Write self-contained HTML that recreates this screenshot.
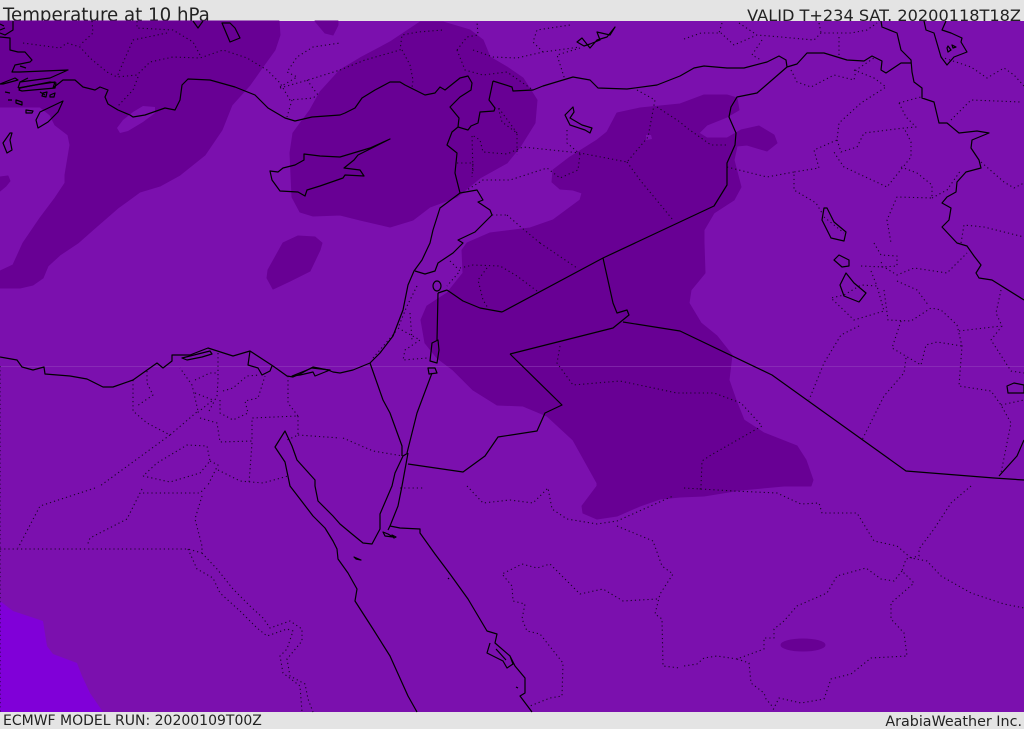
<!DOCTYPE html>
<html><head><meta charset="utf-8"><title>Temperature at 10 hPa</title>
<style>
html,body{margin:0;padding:0;background:#e4e4e4}
#w{position:relative;width:1024px;height:729px;overflow:hidden;background:#e4e4e4;font-family:"DejaVu Sans","Liberation Sans",sans-serif;color:#222}
.t{position:absolute;white-space:nowrap;line-height:1}
svg{position:absolute;left:0;top:0}
</style></head><body><div id="w">
<div class="t" style="left:3px;top:7px;font-size:18.2px">Temperature at 10 hPa</div>
<div class="t" style="right:3px;top:8px;font-size:16.15px">VALID T+234 SAT. 20200118T18Z</div>
<div class="t" style="left:3px;top:714px;font-size:14px">ECMWF MODEL RUN: 20200109T00Z</div>
<div class="t" style="right:2px;top:715px;font-size:14.3px">ArabiaWeather Inc.</div>
<svg width="1024" height="729" viewBox="0 0 1024 729">
<rect x="0" y="21" width="1024" height="691" fill="#7b10ae"/>
<g fill="#680094" stroke="#680094" stroke-width="1" stroke-linejoin="round">
<path d="M0 21L279 21 280 35 275 50 262 68 250 85 232 105 222 130 205 155 180 175 160 186 140 192 118 208 95 228 78 243 60 255 48 266 43 278 33 285 20 288 0 288 0 271 13 265 23 243 40 218 55 198 65 183 65 175 70 145 68 135 55 125 50 115 40 107 0 107Z"/>
<path d="M0 177L8 176 10 181 6 186 0 191Z"/>
<path d="M315 21L325 33 333 35 338 25 338 21Z"/>
<path d="M420 22L390 42 360 58 340 70 320 92 310 110 293 133 290 153 292 197 300 212 313 216 340 215 360 220 390 227 413 220 430 207 457 197 480 178 507 163 520 147 535 123 537 100 523 78 507 67 490 57 483 40 470 30 443 22Z"/>
<path d="M298 236L315 237 322 243 320 250 310 271 290 281 273 289 267 278 268 270 283 243Z"/>
<path d="M467 243L490 233 530 228 553 220 580 200 582 193 573 190 560 189 552 182 553 170 570 157 597 140 607 132 617 113 640 108 680 104 704 95 727 95 737 98 739 110 727 117 707 125 699 133 707 138 727 138 741 130 759 126 774 135 777 143 767 151 747 145 737 146 734 160 741 187 734 200 714 213 704 230 704 243 705 273 691 290 689 303 701 323 717 336 732 355 729 380 736 400 744 420 764 433 797 446 806 460 813 480 811 486 784 486 741 490 704 496 680 497 660 499 640 506 617 516 597 519 583 513 582 506 597 486 597 483 573 440 547 416 523 406 497 405 473 390 453 370 437 358 425 343 421 320 427 306 447 293 463 273 462 250Z"/>
<ellipse cx="803" cy="645" rx="22" ry="6"/>
</g>
<path d="M117 128L123 120 133 112 143 106 155 107 155 113 143 122 128 131 120 133Z" fill="#7b10ae"/>
<path d="M646 135L651 135 652 139 646 140Z" fill="#7b10ae"/>
<path d="M0 601L13 611 43 621 47 646 53 654 77 663 82 676 90 693 103 712 0 712Z" fill="#8000d8"/>
<rect x="0" y="366" width="1024" height="1" fill="#9a4cc0" opacity=".45"/>

<g fill="none" stroke="#1a0428" stroke-width="1.1" stroke-dasharray="1.2 3" stroke-linejoin="round">
<path d="M0 366V712"/>
<path d="M23 43L60 48 67 43 80 47 90 58 107 72 117 77 137 75 150 62 173 57 200 58 223 50 247 58 267 70 280 83 290 100 313 98 317 95"/>
<path d="M92 21L93 33 80 45M137 21L137 28 173 30 193 42 200 55M167 33L133 40 122 65 117 77M138 77L133 90 117 107M280 87L297 77 287 72 297 57 313 47 340 43M280 88L308 80 340 70M292 100L287 117M307 80L318 95"/>
<path d="M340 70L365 60 400 50 402 35 418 32 443 30M402 50L410 65 413 80 412 88M457 50L467 37 478 35 477 22M457 50L465 70 483 75 507 72 533 90M473 50L493 57 517 58 543 52 580 47M543 52L533 42 537 30 570 25M580 48L557 55 565 80"/>
<path d="M637 90L655 100 648 137 627 162 580 153 523 147 507 154 483 152 480 140 472 135 473 173M517 133L498 107 502 122 517 133 517 155M567 130L567 143 580 154M627 162L640 180 673 220M657 107L680 122 687 128 711 145 727 145M580 154L578 170 560 178 547 168 510 180 483 180 467 190M507 215L522 228 540 243M492 215L507 215M457 163L473 163 472 177"/>
<path d="M684 39L701 33 721 33 734 45 757 35 781 37 814 40 821 33 851 33 867 30 877 23M739 23L757 35M762 40L752 55 761 60M819 23L821 33M839 37L839 58M722 23L719 33M791 70L797 82 811 87 834 75 854 80 856 70 874 58M854 70L874 78 886 87 861 103 839 123 837 140 814 150 819 168 794 172 794 190 816 203 822 213M727 167L767 177 794 172M837 140L841 152 857 147 864 133 904 128 911 142 911 157 887 187 844 167 839 160 834 152M901 167L917 173 932 185 932 198 897 197 887 220 891 243M932 198L947 190 961 170M899 103L917 98 921 97M899 103L906 117 916 127 904 128M951 120L971 100 1021 102M941 57L971 67 987 78 1004 68 1014 75 1024 86M981 162L1004 182 1014 188 1024 183M961 243L964 225 984 227 1024 237M824 217L844 233"/>
<path d="M874 243L881 255 897 256 897 266 882 267 881 260M861 266L884 267 897 275 914 268 947 273 967 253M871 271L877 286 861 285 844 295 831 298 854 320 884 311 877 286M884 290L888 320 911 321 931 308 941 310 957 325 962 346 959 386 991 391 1001 405 1011 423 1001 473M897 281L917 290 929 306M901 321L892 348 921 365 926 345 937 342 962 346M959 331L1001 326M1001 290L996 313 1002 326 991 340 1011 371 1024 373M906 358L904 373 884 396 862 440M859 326L841 335 824 363 809 400M1001 405L1024 400M686 393L714 393 741 403 762 426 711 455 702 461 701 486 700 490"/>
<path d="M560 346L557 363 573 385 620 381 677 393 686 393M540 243L577 268M537 291L517 276 500 266 473 265 460 268M487 268L478 280 483 300 488 308M417 286L407 306 398 328 420 340 405 350 403 360 427 358M373 358L397 330M410 313L412 340M450 261L460 271 447 286M343 438L373 451 403 456"/>
<path d="M133 380L133 411 147 423 170 435 198 411 192 385 180 368M147 371L147 383 153 395 137 406M170 435L100 486M195 380L210 373 217 373M218 353L218 380 217 396 208 413M195 393L213 400 197 413M220 400L220 413 233 420 248 413 245 401 258 398 265 376M223 391L233 388 247 376 260 375M200 418L217 423 220 442 252 441 252 418 297 416M252 443L249 483M298 416L298 435 287 440M298 435L340 438M288 376L288 403 298 416M143 476L170 482 200 473 210 461 207 446 187 445 157 463 143 476M210 461L218 465 208 485M218 470L240 481 263 483 288 476"/>
<path d="M95 488L40 506 18 548M142 489L127 519 90 538 87 546M143 493L200 493 207 486M0 549H188L202 553 202 546 195 519 202 496M188 549L197 569 213 578 220 593 240 611 257 628 267 636 287 629 293 631 287 649 280 656 283 673 300 686 302 712M202 553L217 569 233 589 250 606 263 618 270 628 290 621 302 629 302 641 287 659 290 676 305 684 308 699 313 712"/>
<path d="M400 488L423 488M467 486L483 503 510 500 533 503 548 488 552 509 567 519 597 524 617 521 673 496M617 526L653 541 662 566 673 574 660 594 655 614 662 619 663 666 680 668M657 599L623 601 603 589 580 594 567 581 550 564 537 568 522 564 502 574 512 586 513 601 525 604 522 619 527 631 540 634 563 663 562 696 550 698 530 706"/>
<path d="M684 488L734 491 777 493 801 504 819 503 822 513 857 513 874 541 897 546 911 558 927 561 941 576 971 593 1004 604 1024 608M971 486L951 503 934 529 919 549 919 556 906 559 902 571 914 583 891 603 891 619 904 633 907 656 871 658 851 674 831 679 824 699 801 703 779 698 772 712M902 571L894 581 881 579 866 568 837 576 827 593 797 606 784 621 774 629 774 638 764 638 764 649 737 659 717 656 704 658 697 664 684 666M737 659L749 663 751 683 764 693 766 699 772 706"/>
</g>

<g fill="none" stroke="#000" stroke-width="1.2" stroke-linejoin="round">
<path d="M13 21L13 30 5 35 0 33M0 37L10 38 10 50 18 52 25 52 32 60 30 62 15 65 12 72 20 72 68 70 50 78 20 82 18 88M18 88L35 85 55 82 53 88 63 80 75 80 83 87 95 90 100 87 108 90 105 97 108 104 118 110 130 115 133 117 145 115 165 108 175 110 180 100 182 85 188 79 210 80 235 87 255 95 268 108 285 118 295 121 312 117 340 115 345 113 355 108 362 98 375 90 390 82 400 82 405 85 425 95 435 93 440 87 445 90 460 78 468 76 472 83 471 90 460 97 450 107 459 118 458 127 452 132 447 145 457 153 455 173 460 193 440 208 433 230 430 243 422 260 414 271 408 285 403 310 393 336 380 353 370 363 353 370 340 373 333 372 328 370 313 367 300 374 293 377 287 376 273 366 250 351 233 356 208 348 190 355 172 355 172 361 163 368 157 363 133 380 113 387 103 387 87 379 70 376 45 374 44 367 33 370 22 367 17 360 0 357"/>
<path d="M0 84L15 78 18 80 3 84ZM20 82L28 78M20 66L26 68M8 100L12 100M5 92L10 93M26 110L33 111 32 113 26 113ZM16 100L22 102 22 105 16 103ZM40 92L45 95M43 93L47 92 46 97 42 96ZM50 95L55 93 54 97 50 97ZM20 88L50 82 56 83 55 88 22 91 19 90ZM0 24L4 26M0 30L5 28"/>
<path d="M63 101L40 112 36 120 38 128 48 122 58 112 63 101ZM10 133L3 143 7 153 12 150 10 140 12 133ZM222 23L230 42 240 38 235 28 230 23ZM193 21L198 28 203 21"/>
<path d="M182 358L210 351 212 354 202 357 187 360ZM250 351L248 365 258 368 262 375 270 371 272 366M292 376L312 368 330 370 315 376 313 372 300 375Z"/>
<path d="M370 363L383 400 390 413 402 446 402 456M438 293L437 340M432 373L417 413 407 453M408 453L403 456 395 473 392 486 380 514 380 529 372 544 363 543 352 534 340 524 333 516 318 501 315 486 315 480 297 460 292 446 285 431 275 447 285 462 290 486 300 499 313 516 325 528 333 541 337 549 338 559 348 573 357 589 355 601 373 629 390 656 408 696 417 712M408 453L402 486 398 506 390 526 388 530M390 526L400 528 420 529 420 533 435 554 450 574 468 599 487 631 497 634 495 643 510 656 515 666 525 678 525 693 520 696 532 712M490 643L487 653 503 661 507 668 513 664 510 656M496 649L506 660M383 532L388 534 393 537 385 536ZM392 535L396 537 394 538ZM354 557L361 560 356 559ZM448 578L449 579M516 687L518 688"/>
<path d="M502 312L603 258 714 206 727 185 727 163 735 145 736 133 729 117 731 107 737 97 757 93 787 67M493 81L512 87 513 91 533 90 543 86 573 77 590 80 598 88 627 89 657 85 680 76 694 68 704 66 727 68 744 68 767 62 779 56 786 60 787 67 797 64 807 53 824 53 847 60 864 61 872 56 882 61 881 70 886 73 901 63 911 63M493 81L489 100 495 108 494 111 480 112 478 123 471 126 468 130 458 127M881 21L882 27 897 33 901 50 911 60 912 72 914 82 922 88 922 98 934 102 939 123 947 123 959 133 977 131 989 133 972 140 971 148 979 160 981 168 966 172 957 182 956 192 947 197 942 203 951 208 949 220 942 227 957 243 967 246 974 256 981 265 976 273 979 278 992 280 1024 300"/>
<path d="M924 21L926 30 934 33 941 57 947 65 954 57 967 52 961 42 962 38 951 33 942 30 946 21M948 46L951 50 948 52 947 48ZM952 45L956 47 953 48Z"/>
<path d="M824 208L822 220 831 238 844 241 846 232 834 222 827 208ZM834 260L839 255 849 260 849 266 842 267ZM846 273L854 283 866 293 859 302 844 296 840 285 846 273ZM1007 386L1014 383 1024 385 1024 393 1008 393Z"/>
<path d="M510 354L613 328 629 315 627 310 617 313 613 303 603 258M623 322L680 331 772 375 906 471 994 478 1024 480M999 476L1017 456 1024 440M510 354L562 405 545 413 537 431 498 437 485 456 463 472 408 464"/>
<path d="M460 193L477 190 483 200 478 202 490 210 492 215 475 232 458 240 463 243 460 246 453 253 438 263 435 271 425 274 415 271M447 290L463 301 480 308 502 312M447 290L438 293M433 286a4 5 0 1 0 8 0a4 5 0 1 0-8 0ZM432 343L438 340 439 350 437 363 430 361ZM428 368L435 368 437 373 429 374Z"/>
<path d="M270 171L278 172 283 168 295 165 304 160 304 154 320 156 340 157 370 148 390 139 358 155 354 160 344 168 360 170 364 176 345 175 343 178 320 186 307 190 305 196 298 192 280 191 272 180 270 171Z"/>
<path d="M577 42L582 38 590 48 597 40 607 37 615 27 610 35 597 32 600 40 590 44 584 46 577 42ZM573 107L565 115 570 125 585 130 590 133 592 128 582 125 570 118 574 112Z"/>
</g>
</svg>
</div></body></html>
